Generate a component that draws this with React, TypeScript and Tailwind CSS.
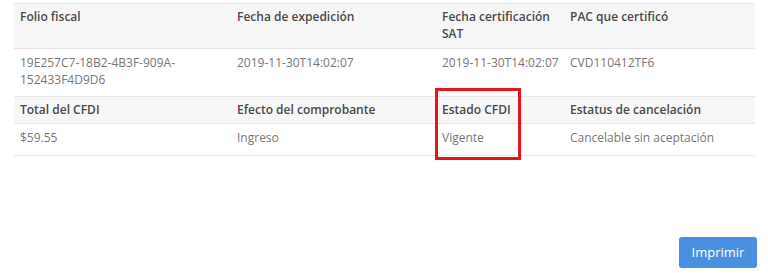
import React from "react";

type Cell = { label: string; value: string; nowrap?: boolean };

const topRow: Cell[] = [
  { label: "Folio fiscal", value: "19E257C7-18B2-4B3F-909A-152433F4D9D6" },
  { label: "Fecha de expedición", value: "2019-11-30T14:02:07", nowrap: true },
  { label: "Fecha certificación SAT", value: "2019-11-30T14:02:07", nowrap: true },
  { label: "PAC que certificó", value: "CVD110412TF6" },
];

const bottomRow: Cell[] = [
  { label: "Total del CFDI", value: "$59.55" },
  { label: "Efecto del comprobante", value: "Ingreso" },
  { label: "Estado CFDI", value: "Vigente" },
  { label: "Estatus de cancelación", value: "Cancelable sin aceptación" },
];

const colWidths = ["w-[217px]", "w-[205px]", "w-[128px]", "w-[191px]"];

export default function App() {
  return (
    <div className="relative h-[273px] w-[768px] bg-white font-['Open_Sans',sans-serif] text-[12px] leading-[17px]">
      <div className="pl-[14px] pt-[3px]">
        <table className="w-[741px] table-fixed border-collapse">
          <colgroup>
            {colWidths.map((w) => (
              <col key={w} className={w} />
            ))}
          </colgroup>
          <tbody>
            <tr className="h-[45px] border-y border-[#e6e6e6] bg-[#f7f7f7] align-top">
              {topRow.map((c) => (
                <th key={c.label} className="px-[6px] pt-[4px] text-left font-semibold text-[#4a4a4a]">
                  {c.label}
                </th>
              ))}
            </tr>
            <tr className="h-[48px] border-b border-[#e6e6e6] align-top">
              {topRow.map((c) => (
                <td
                  key={c.label}
                  className={
                    c.nowrap
                      ? "whitespace-nowrap px-[6px] pt-[5px] text-[#777]"
                      : "break-words px-[6px] pt-[5px] text-[#777]"
                  }
                >
                  {c.value}
                </td>
              ))}
            </tr>
            <tr className="h-[27px] border-b border-[#e6e6e6] bg-[#f7f7f7] align-top">
              {bottomRow.map((c) => (
                <th key={c.label} className="px-[6px] pt-[4px] text-left font-semibold text-[#4a4a4a]">
                  {c.label}
                </th>
              ))}
            </tr>
            <tr className="h-[32px] border-b border-[#e6e6e6] align-top">
              {bottomRow.map((c) => (
                <td key={c.label} className="px-[6px] pt-[5px] text-[#777]">
                  {c.value}
                </td>
              ))}
            </tr>
          </tbody>
        </table>
      </div>

      {/* highlight around the CFDI status */}
      <div className="absolute left-[435px] top-[88px] h-[72px] w-[86px] border-[3px] border-[#e8141b]" />

      <div className="flex justify-end pr-[11px] pt-[81px]">
        <button className="h-[31px] w-[78px] rounded-[3px] bg-[#4a90e2] text-[13px] text-white">
          Imprimir
        </button>
      </div>
    </div>
  );
}
